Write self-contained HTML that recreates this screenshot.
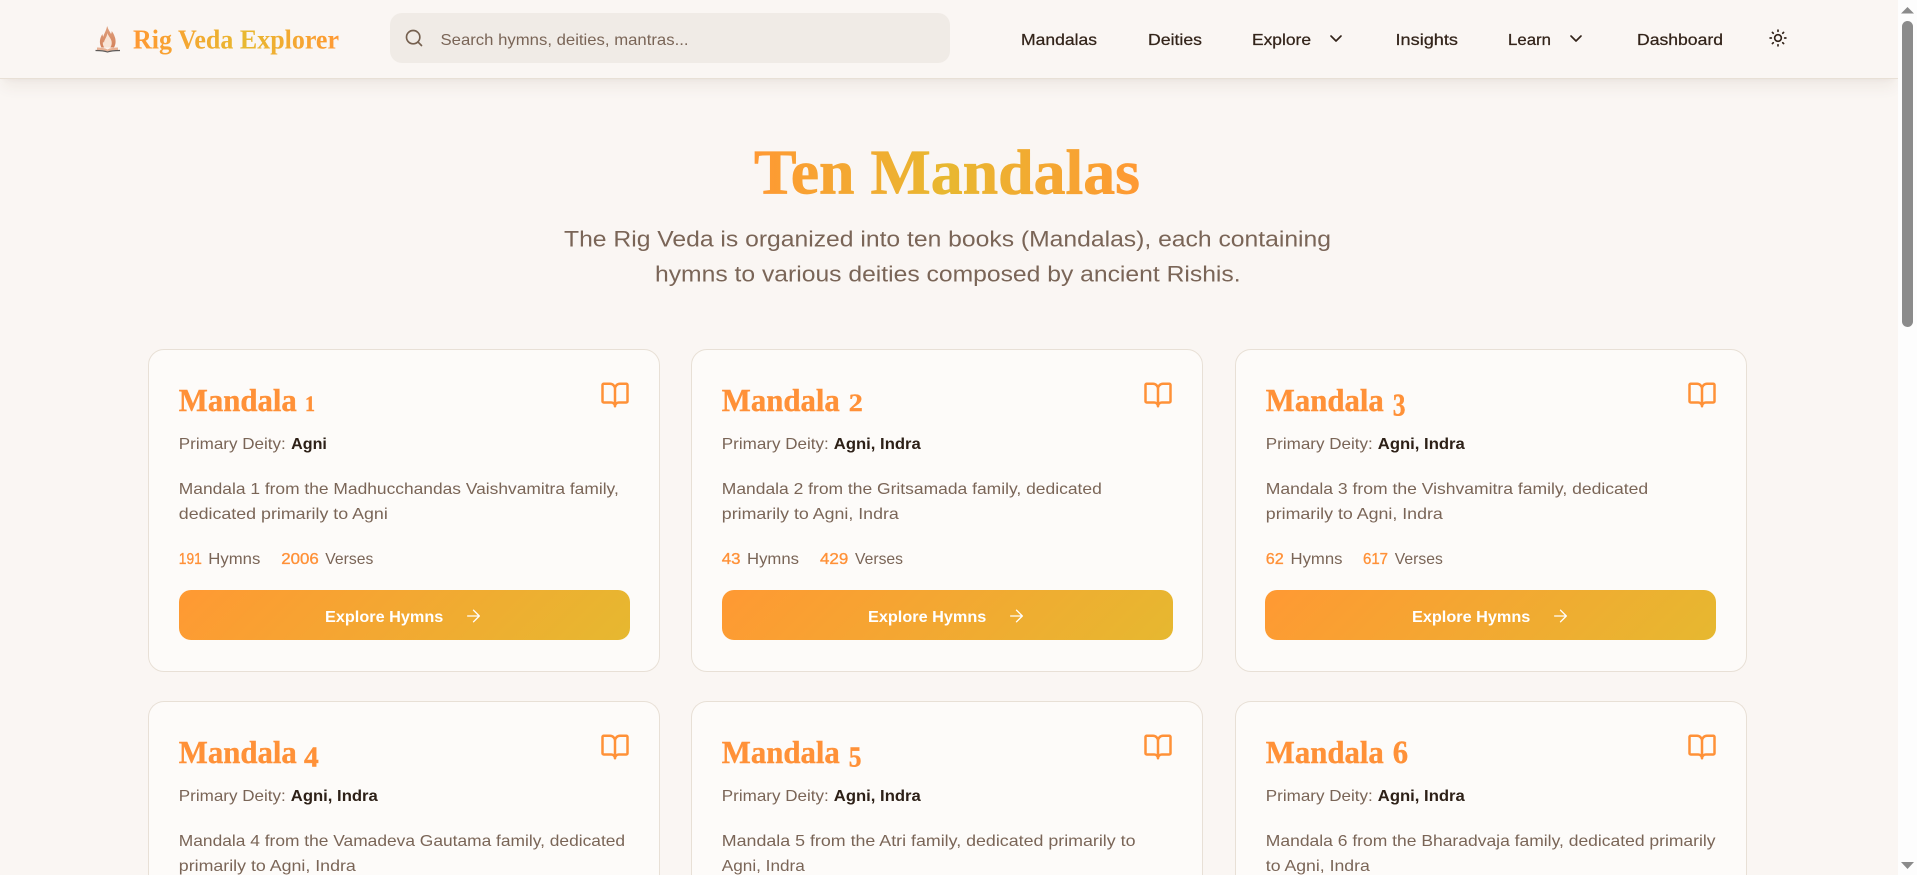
<!DOCTYPE html>
<html lang="en">
<head>
<meta charset="utf-8">
<title>Ten Mandalas - Rig Veda Explorer</title>
<style>
html,body{margin:0;padding:0;width:1917px;height:875px;overflow:hidden;background:#faf6f3}
body{position:relative;font-family:"Liberation Sans",sans-serif}
svg{position:absolute;left:0;top:0;overflow:visible;display:block}
header{position:absolute;left:0;top:0;width:1898px;height:78px;background:#faf6f3;border-bottom:1px solid #e8e0d6;box-shadow:0 10px 15px -3px rgba(90,60,30,.07),0 4px 6px -4px rgba(90,60,30,.05);z-index:3}
.search{position:absolute;left:390px;top:13px;width:560px;height:50px;border-radius:12px;background:#f0ebe6}
main{position:absolute;left:0;top:0;width:1898px;height:875px;overflow:hidden}
article{position:absolute;width:510px;height:320.7px;background:#fdfbf9;border:1px solid #e8e0d6;border-radius:16px}
article.low{height:173px;border-bottom:none;border-radius:16px 16px 0 0;overflow:hidden}
article svg{left:-1px;top:-1px}
.btn{position:absolute;left:29.8px;top:240px;width:451px;height:50px;border-radius:12px;background:linear-gradient(135deg,#ff9933,#e6b830)}
.s{font-family:"Liberation Sans",sans-serif;font-size:16px;fill:#7a6557}
.n{font-family:"Liberation Sans",sans-serif;font-size:16px;fill:#33241a;stroke:#33241a;stroke-width:.25px}
.b{font-family:"Liberation Sans",sans-serif;font-size:16px;font-weight:700;fill:#2d2017}
.o{font-family:"Liberation Sans",sans-serif;font-size:16px;fill:#ff9138;stroke:#ff9138;stroke-width:.35px}
.h{font-family:"Liberation Serif",serif;font-weight:700;font-size:32px;fill:#ff9138;stroke:#ff9138;stroke-width:.4px}
.w{font-family:"Liberation Sans",sans-serif;font-size:16px;font-weight:700;fill:#fff}
.i{fill:none;stroke-width:2;stroke-linecap:round;stroke-linejoin:round}
.t{stroke-width:1.6}
.bar{position:absolute;left:1898px;top:0;width:19px;height:875px;background:#fdfdfd;z-index:5}
.thumb{position:absolute;left:4px;top:21px;width:11px;height:306px;border-radius:6px;background:#8b8b8b}
</style>
</head>
<body>
<main>
<svg width="1898" height="300" viewBox="0 0 1898 300">
<defs>
<linearGradient id="tg" gradientUnits="userSpaceOnUse" x1="754" y1="0" x2="1140" y2="0"><stop offset="0" stop-color="#ff9933"/><stop offset=".5" stop-color="#e8b830"/><stop offset="1" stop-color="#ff9933"/></linearGradient>
</defs>
<text x="754" y="193.500" font-family="Liberation Serif,serif" font-weight="700" font-size="64" fill="url(#tg)" stroke="url(#tg)" stroke-width=".7" textLength="386" lengthAdjust="spacingAndGlyphs">Ten Mandalas</text>
<text x="564" y="246.500" style="font-family:'Liberation Sans',sans-serif;font-size:22.4px;fill:#7a6557" textLength="767" lengthAdjust="spacingAndGlyphs">The Rig Veda is organized into ten books (Mandalas), each containing</text>
<text x="655" y="281.500" style="font-family:'Liberation Sans',sans-serif;font-size:22.4px;fill:#7a6557" textLength="585.600" lengthAdjust="spacingAndGlyphs">hymns to various deities composed by ancient Rishis.</text>
</svg>

<!-- Card 1 -->
<article style="left:148.200px;top:349px">
<div class="btn"></div>
<svg width="512" height="322" viewBox="0 0 512 322">
<text class="h" x="30.800" y="62" textLength="118" lengthAdjust="spacingAndGlyphs">Mandala</text>
<text class="h" style="font-size:22px" x="157" y="62" textLength="10" lengthAdjust="spacingAndGlyphs">1</text>
<text class="s" x="30.800" y="100" textLength="107" lengthAdjust="spacingAndGlyphs">Primary Deity:</text>
<text class="b" x="143.200" y="100" textLength="35.700" lengthAdjust="spacingAndGlyphs">Agni</text>
<text class="s" x="30.800" y="145" textLength="440" lengthAdjust="spacingAndGlyphs">Mandala 1 from the Madhucchandas Vaishvamitra family,</text>
<text class="s" x="30.800" y="170" textLength="209" lengthAdjust="spacingAndGlyphs">dedicated primarily to Agni</text>
<text class="o" x="30.800" y="215" textLength="23" lengthAdjust="spacingAndGlyphs">191</text>
<text class="s" x="60.300" y="215" textLength="52" lengthAdjust="spacingAndGlyphs">Hymns</text>
<text class="o" x="133.300" y="215" textLength="37.500" lengthAdjust="spacingAndGlyphs">2006</text>
<text class="s" x="177.300" y="215" textLength="48" lengthAdjust="spacingAndGlyphs">Verses</text>
<text class="w" x="177" y="273.200" textLength="118.300" lengthAdjust="spacingAndGlyphs">Explore Hymns</text>
<g transform="translate(315.500 257)"><svg width="20" height="20" viewBox="0 0 24 24" style="left:0;top:0"><path class="i t" stroke="#fff" d="M5 12h14M12 5l7 7-7 7"/></svg></g>
<g transform="translate(452 31)"><svg width="30" height="30" viewBox="0 0 24 24" style="left:0;top:0"><path class="i" stroke="#ff9138" d="M12 7v14M3 18a1 1 0 0 1-1-1V4a1 1 0 0 1 1-1h5a4 4 0 0 1 4 4 4 4 0 0 1 4-4h5a1 1 0 0 1 1 1v13a1 1 0 0 1-1 1h-6a3 3 0 0 0-3 3 3 3 0 0 0-3-3z"/></svg></g>
</svg>
</article>

<!-- Card 2 -->
<article style="left:691.300px;top:349px">
<div class="btn"></div>
<svg width="512" height="322" viewBox="0 0 512 322">
<text class="h" x="30.800" y="62" textLength="118" lengthAdjust="spacingAndGlyphs">Mandala</text>
<text class="h" style="font-size:25px" x="157.800" y="62" textLength="14" lengthAdjust="spacingAndGlyphs">2</text>
<text class="s" x="30.800" y="100" textLength="107" lengthAdjust="spacingAndGlyphs">Primary Deity:</text>
<text class="b" x="142.800" y="100" textLength="87" lengthAdjust="spacingAndGlyphs">Agni, Indra</text>
<text class="s" x="30.800" y="145" textLength="380" lengthAdjust="spacingAndGlyphs">Mandala 2 from the Gritsamada family, dedicated</text>
<text class="s" x="30.800" y="170" textLength="177" lengthAdjust="spacingAndGlyphs">primarily to Agni, Indra</text>
<text class="o" x="30.800" y="215" textLength="18.700" lengthAdjust="spacingAndGlyphs">43</text>
<text class="s" x="56" y="215" textLength="52" lengthAdjust="spacingAndGlyphs">Hymns</text>
<text class="o" x="129" y="215" textLength="28.300" lengthAdjust="spacingAndGlyphs">429</text>
<text class="s" x="164" y="215" textLength="48" lengthAdjust="spacingAndGlyphs">Verses</text>
<text class="w" x="177" y="273.200" textLength="118.300" lengthAdjust="spacingAndGlyphs">Explore Hymns</text>
<g transform="translate(315.500 257)"><svg width="20" height="20" viewBox="0 0 24 24" style="left:0;top:0"><path class="i t" stroke="#fff" d="M5 12h14M12 5l7 7-7 7"/></svg></g>
<g transform="translate(452 31)"><svg width="30" height="30" viewBox="0 0 24 24" style="left:0;top:0"><path class="i" stroke="#ff9138" d="M12 7v14M3 18a1 1 0 0 1-1-1V4a1 1 0 0 1 1-1h5a4 4 0 0 1 4 4 4 4 0 0 1 4-4h5a1 1 0 0 1 1 1v13a1 1 0 0 1-1 1h-6a3 3 0 0 0-3 3 3 3 0 0 0-3-3z"/></svg></g>
</svg>
</article>

<!-- Card 3 -->
<article style="left:1234.700px;top:349px">
<div class="btn"></div>
<svg width="512" height="322" viewBox="0 0 512 322">
<text class="h" x="30.800" y="62" textLength="118" lengthAdjust="spacingAndGlyphs">Mandala</text>
<text class="h" style="font-size:32px" x="157.800" y="66.300" textLength="12.700" lengthAdjust="spacingAndGlyphs">3</text>
<text class="s" x="30.800" y="100" textLength="107" lengthAdjust="spacingAndGlyphs">Primary Deity:</text>
<text class="b" x="142.800" y="100" textLength="87" lengthAdjust="spacingAndGlyphs">Agni, Indra</text>
<text class="s" x="30.800" y="145" textLength="382.300" lengthAdjust="spacingAndGlyphs">Mandala 3 from the Vishvamitra family, dedicated</text>
<text class="s" x="30.800" y="170" textLength="177" lengthAdjust="spacingAndGlyphs">primarily to Agni, Indra</text>
<text class="o" x="30.800" y="215" textLength="18" lengthAdjust="spacingAndGlyphs">62</text>
<text class="s" x="55.500" y="215" textLength="52" lengthAdjust="spacingAndGlyphs">Hymns</text>
<text class="o" x="128" y="215" textLength="25" lengthAdjust="spacingAndGlyphs">617</text>
<text class="s" x="159.800" y="215" textLength="48" lengthAdjust="spacingAndGlyphs">Verses</text>
<text class="w" x="177" y="273.200" textLength="118.300" lengthAdjust="spacingAndGlyphs">Explore Hymns</text>
<g transform="translate(315.500 257)"><svg width="20" height="20" viewBox="0 0 24 24" style="left:0;top:0"><path class="i t" stroke="#fff" d="M5 12h14M12 5l7 7-7 7"/></svg></g>
<g transform="translate(452 31)"><svg width="30" height="30" viewBox="0 0 24 24" style="left:0;top:0"><path class="i" stroke="#ff9138" d="M12 7v14M3 18a1 1 0 0 1-1-1V4a1 1 0 0 1 1-1h5a4 4 0 0 1 4 4 4 4 0 0 1 4-4h5a1 1 0 0 1 1 1v13a1 1 0 0 1-1 1h-6a3 3 0 0 0-3 3 3 3 0 0 0-3-3z"/></svg></g>
</svg>
</article>

<!-- Card 4 -->
<article class="low" style="left:148.200px;top:701px">
<svg width="512" height="174" viewBox="0 0 512 174">
<text class="h" x="30.800" y="62" textLength="118" lengthAdjust="spacingAndGlyphs">Mandala</text>
<text class="h" style="font-size:29px" x="156" y="65.500" textLength="14.700" lengthAdjust="spacingAndGlyphs">4</text>
<text class="s" x="30.800" y="100" textLength="107" lengthAdjust="spacingAndGlyphs">Primary Deity:</text>
<text class="b" x="142.800" y="100" textLength="87" lengthAdjust="spacingAndGlyphs">Agni, Indra</text>
<text class="s" x="30.800" y="145" textLength="446.300" lengthAdjust="spacingAndGlyphs">Mandala 4 from the Vamadeva Gautama family, dedicated</text>
<text class="s" x="30.800" y="170" textLength="177" lengthAdjust="spacingAndGlyphs">primarily to Agni, Indra</text>
<g transform="translate(452 31)"><svg width="30" height="30" viewBox="0 0 24 24" style="left:0;top:0"><path class="i" stroke="#ff9138" d="M12 7v14M3 18a1 1 0 0 1-1-1V4a1 1 0 0 1 1-1h5a4 4 0 0 1 4 4 4 4 0 0 1 4-4h5a1 1 0 0 1 1 1v13a1 1 0 0 1-1 1h-6a3 3 0 0 0-3 3 3 3 0 0 0-3-3z"/></svg></g>
</svg>
</article>

<!-- Card 5 -->
<article class="low" style="left:691.300px;top:701px">
<svg width="512" height="174" viewBox="0 0 512 174">
<text class="h" x="30.800" y="62" textLength="118" lengthAdjust="spacingAndGlyphs">Mandala</text>
<text class="h" style="font-size:29px" x="157.800" y="65.500" textLength="12.700" lengthAdjust="spacingAndGlyphs">5</text>
<text class="s" x="30.800" y="100" textLength="107" lengthAdjust="spacingAndGlyphs">Primary Deity:</text>
<text class="b" x="142.800" y="100" textLength="87" lengthAdjust="spacingAndGlyphs">Agni, Indra</text>
<text class="s" x="30.800" y="145" textLength="413.700" lengthAdjust="spacingAndGlyphs">Mandala 5 from the Atri family, dedicated primarily to</text>
<text class="s" x="30.800" y="170" textLength="83" lengthAdjust="spacingAndGlyphs">Agni, Indra</text>
<g transform="translate(452 31)"><svg width="30" height="30" viewBox="0 0 24 24" style="left:0;top:0"><path class="i" stroke="#ff9138" d="M12 7v14M3 18a1 1 0 0 1-1-1V4a1 1 0 0 1 1-1h5a4 4 0 0 1 4 4 4 4 0 0 1 4-4h5a1 1 0 0 1 1 1v13a1 1 0 0 1-1 1h-6a3 3 0 0 0-3 3 3 3 0 0 0-3-3z"/></svg></g>
</svg>
</article>

<!-- Card 6 -->
<article class="low" style="left:1234.700px;top:701px">
<svg width="512" height="174" viewBox="0 0 512 174">
<text class="h" x="30.800" y="62" textLength="118" lengthAdjust="spacingAndGlyphs">Mandala</text>
<text class="h" style="font-size:33px" x="157.800" y="62" textLength="15.300" lengthAdjust="spacingAndGlyphs">6</text>
<text class="s" x="30.800" y="100" textLength="107" lengthAdjust="spacingAndGlyphs">Primary Deity:</text>
<text class="b" x="142.800" y="100" textLength="87" lengthAdjust="spacingAndGlyphs">Agni, Indra</text>
<text class="s" x="30.800" y="145" textLength="449.700" lengthAdjust="spacingAndGlyphs">Mandala 6 from the Bharadvaja family, dedicated primarily</text>
<text class="s" x="30.800" y="170" textLength="104" lengthAdjust="spacingAndGlyphs">to Agni, Indra</text>
<g transform="translate(452 31)"><svg width="30" height="30" viewBox="0 0 24 24" style="left:0;top:0"><path class="i" stroke="#ff9138" d="M12 7v14M3 18a1 1 0 0 1-1-1V4a1 1 0 0 1 1-1h5a4 4 0 0 1 4 4 4 4 0 0 1 4-4h5a1 1 0 0 1 1 1v13a1 1 0 0 1-1 1h-6a3 3 0 0 0-3 3 3 3 0 0 0-3-3z"/></svg></g>
</svg>
</article>
</main>

<header>
<div class="search"></div>
<svg width="1898" height="78" viewBox="0 0 1898 78">
<defs>
<linearGradient id="lg" gradientUnits="userSpaceOnUse" x1="133" y1="0" x2="339" y2="0"><stop offset="0" stop-color="#ff9933"/><stop offset=".55" stop-color="#e8b830"/><stop offset="1" stop-color="#ff9933"/></linearGradient>
<linearGradient id="fl" x1="0" y1="0" x2="0" y2="1"><stop offset="0" stop-color="#dfa07e"/><stop offset="1" stop-color="#d4835c"/></linearGradient>
</defs>
<!-- logo -->
<path d="M107.500 26.500c.5 3 2.500 5 3.500 7.500c.5-1 .8-2 .7-3c1.500 2 2.300 3.500 3.300 6.500c1 3.500 .8 7-1 10h-12.500c-1.800-3-2-6.500-1-9.500c.5-1.500 1-2.500 2-4c0 1 .3 2 .8 2.800c.6-2.800 2.800-5.800 3.700-10.300z" fill="url(#fl)"/>
<path d="M107.300 33c.6 2.500 3.700 5.200 4.300 8.500c.4 2.300-.1 4.500-1.300 6h-6c-1.300-1.500-1.800-3.700-1.300-6c.3 .5 .6 .9 1 1.200c.2-3.300 3-5.200 3.300-9.700z" fill="#f8e4d6"/>
<path d="M97 47.500c4 0 8 .5 10.500 2c2.500-1.500 6.500-2 10.500-2v2.500c-4 0-8 .3-10.500 1.500c-2.500-1.200-6.500-1.500-10.500-1.500z" fill="#e8b295"/>
<path d="M95.500 50.500c4 0 9 .3 12 1.500c3-1.200 8-1.500 12.500-1.500" fill="none" stroke="#5e5a58" stroke-width="1.200"/>
<text x="133" y="48.500" font-family="Liberation Serif,serif" font-weight="700" font-size="27" fill="url(#lg)" textLength="206" lengthAdjust="spacingAndGlyphs">Rig Veda Explorer</text>
<!-- search -->
<g transform="translate(404 28)"><svg width="20" height="20" viewBox="0 0 24 24" style="left:0;top:0"><circle class="i" stroke="#75604f" cx="11" cy="11" r="8"/><path class="i" stroke="#75604f" d="M21 21l-4.300-4.300"/></svg></g>
<text class="s" x="440.500" y="45.200" textLength="248" lengthAdjust="spacingAndGlyphs">Search hymns, deities, mantras...</text>
<!-- nav -->
<text class="n" x="1021" y="45" textLength="76" lengthAdjust="spacingAndGlyphs">Mandalas</text>
<text class="n" x="1148" y="45" textLength="54" lengthAdjust="spacingAndGlyphs">Deities</text>
<text class="n" x="1252" y="45" textLength="59" lengthAdjust="spacingAndGlyphs">Explore</text>
<g transform="translate(1326 28.500)"><svg width="20" height="20" viewBox="0 0 24 24" style="left:0;top:0"><path class="i" stroke="#33241a" d="M6 9l6 6 6-6"/></svg></g>
<text class="n" x="1395.500" y="45" textLength="62.500" lengthAdjust="spacingAndGlyphs">Insights</text>
<text class="n" x="1508" y="45" textLength="43" lengthAdjust="spacingAndGlyphs">Learn</text>
<g transform="translate(1566 28.500)"><svg width="20" height="20" viewBox="0 0 24 24" style="left:0;top:0"><path class="i" stroke="#33241a" d="M6 9l6 6 6-6"/></svg></g>
<text class="n" x="1637" y="45" textLength="86" lengthAdjust="spacingAndGlyphs">Dashboard</text>
<!-- sun -->
<g transform="translate(1768 28)"><svg width="20" height="20" viewBox="0 0 24 24" style="left:0;top:0"><circle class="i" stroke="#33241a" cx="12" cy="12" r="4"/><path class="i" stroke="#33241a" d="M12 2.500v1.500M12 20v1.500M5.300 5.300l1 1M17.700 17.700l1 1M2.500 12h1.500M20 12h1.500M6.300 17.700l-1 1M18.700 5.300l-1 1"/></svg></g>
</svg>
</header>

<div class="bar">
<svg width="19" height="875" viewBox="0 0 19 875">
<path d="M9.500 7L16 13.500H3z" fill="#8b8b8b"/>
<path d="M3 862H16L9.500 869z" fill="#8b8b8b"/>
</svg>
<div class="thumb"></div>
</div>
</body>
</html>
